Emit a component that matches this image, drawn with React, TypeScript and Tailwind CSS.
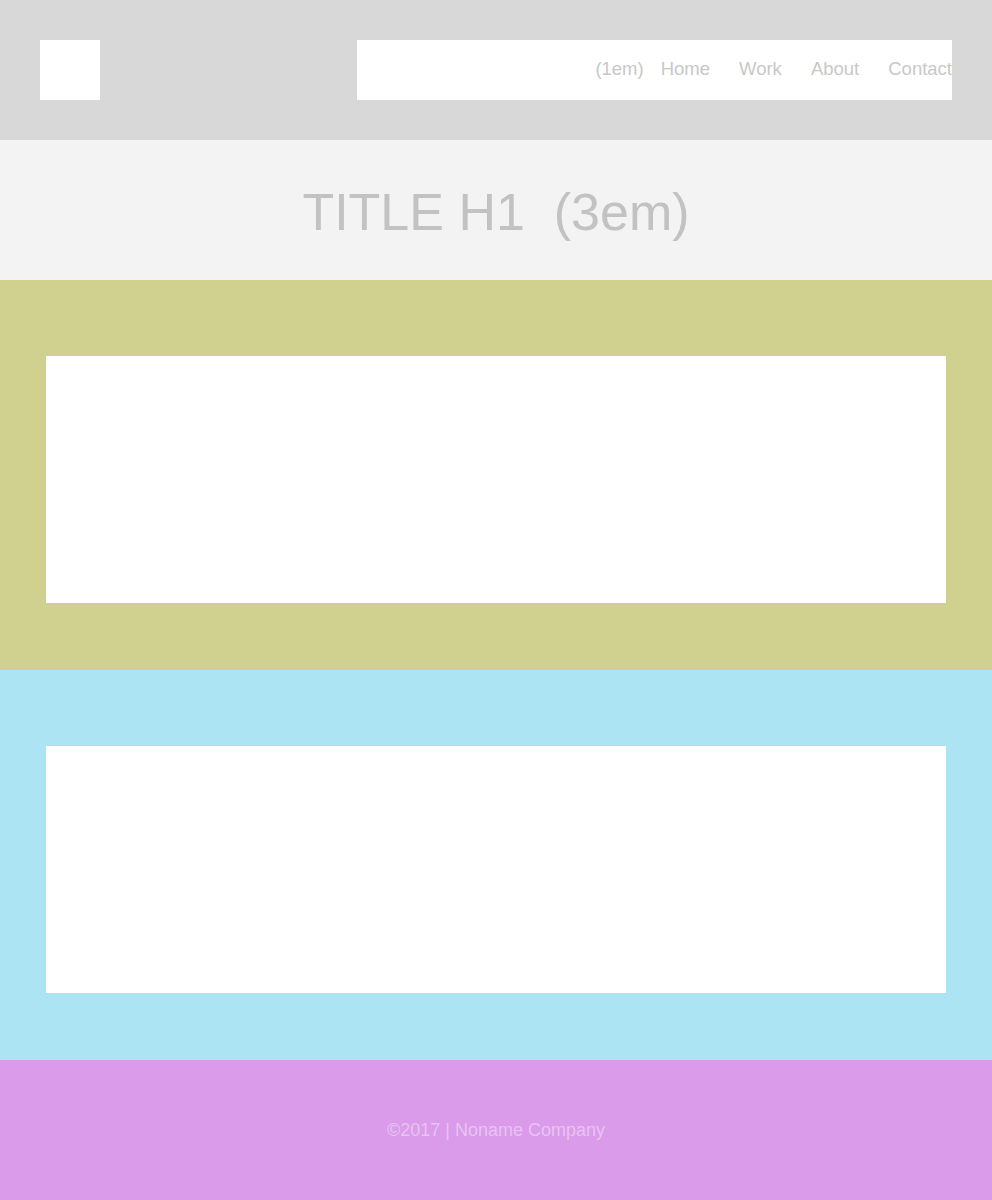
const links = ["Home", "Work", "About", "Contact"];

export default function App() {
  return (
    <div className="w-full font-['Liberation_Sans',Arial,sans-serif]">
      {/* Header */}
      <header className="h-[140px] bg-[#d8d8d8] px-10 flex items-center justify-between">
        <div className="w-[60px] h-[60px] bg-white" />
        <nav className="w-[595px] h-[60px] bg-white flex items-center justify-end pb-[3px] text-[18.5px] text-[#c8c8c8]">
          <span className="mr-[17px]">(1em)</span>
          {links.map((l, i) => (
            <a key={l} className={i < links.length - 1 ? "mr-[29px]" : ""}>
              {l}
            </a>
          ))}
        </nav>
      </header>

      {/* Title */}
      <section className="h-[140px] bg-[#f3f3f3] flex items-center justify-center pt-[4px]">
        <h1 className="text-[52px] leading-none text-[#c2c2c2] whitespace-pre">
          TITLE H1{"  "}(3em)
        </h1>
      </section>

      {/* Content blocks */}
      <section className="bg-[#d0d18f] pt-[76px] pb-[67px] px-[46px]">
        <div className="h-[247px] bg-white" />
      </section>
      <section className="bg-[#ace4f4] pt-[76px] pb-[67px] px-[46px]">
        <div className="h-[247px] bg-white" />
      </section>

      {/* Footer */}
      <footer className="h-[140px] bg-[#d99bea] flex items-center justify-center text-[18px] text-[#e9c3f3]">
        ©2017 | Noname Company
      </footer>
    </div>
  );
}
